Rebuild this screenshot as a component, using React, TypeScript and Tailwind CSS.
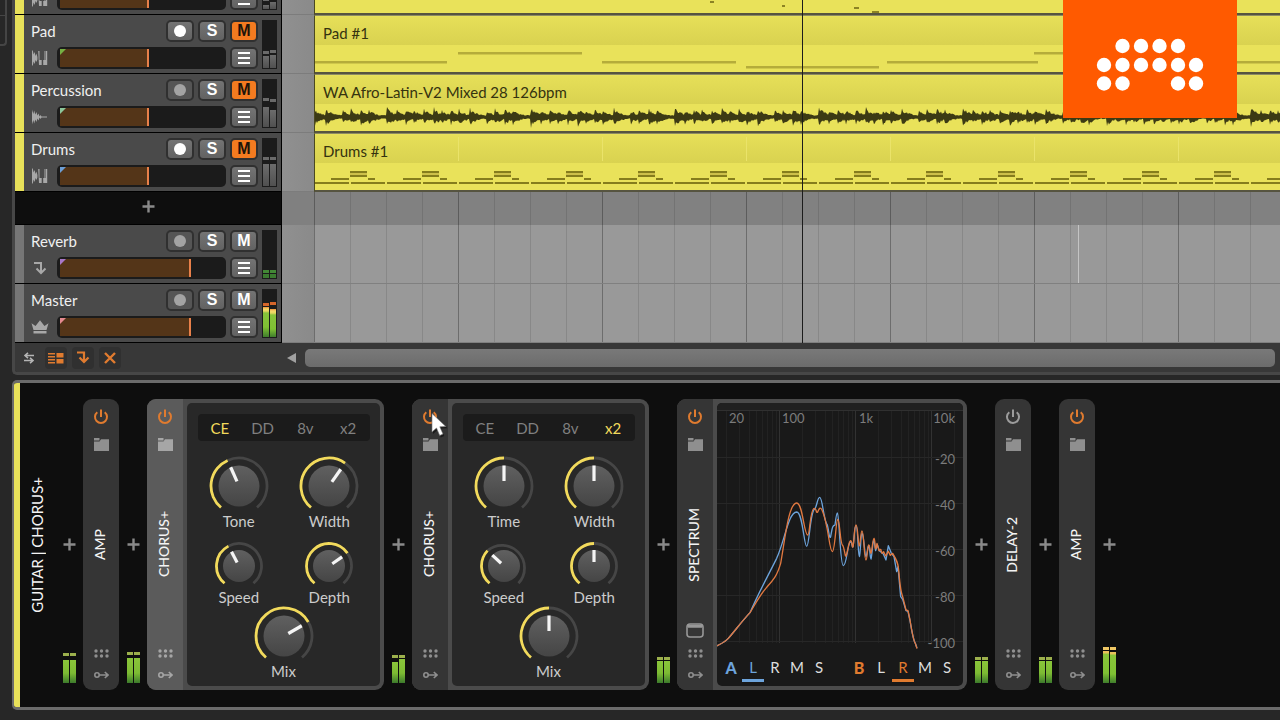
import type { ReactNode } from "react";
import clsx from "clsx";

type Bar = { level: number; gap: number };
type MeterTone = "muted" | "low" | "live" | "hot" | "loud";

type Track = {
  name: string;
  icon: "hybrid" | "audio" | "send" | "master";
  armed: boolean;
  muted: boolean;
  volume: number;
  stripe: string;
  corner: string;
  tone: MeterTone;
  bars: Bar[];
};

const YELLOW = "bg-[#e8e15a]";
const GREY = "bg-[#767676]";

const tracks: Record<string, Track> = {
  guitar: {
    name: "Guitar",
    icon: "hybrid",
    armed: false,
    muted: true,
    volume: 54,
    stripe: YELLOW,
    corner: "border-t-[#7cb342]",
    tone: "muted",
    bars: [
      { level: 4, gap: 4 },
      { level: 7, gap: 2 },
    ],
  },
  pad: {
    name: "Pad",
    icon: "hybrid",
    armed: true,
    muted: true,
    volume: 54,
    stripe: YELLOW,
    corner: "border-t-[#76b043]",
    tone: "muted",
    bars: [
      { level: 12, gap: 2 },
      { level: 13, gap: 2 },
    ],
  },
  percussion: {
    name: "Percussion",
    icon: "audio",
    armed: false,
    muted: true,
    volume: 54,
    stripe: YELLOW,
    corner: "border-t-[#8cc79a]",
    tone: "muted",
    bars: [
      { level: 20, gap: 6 },
      { level: 17, gap: 8 },
    ],
  },
  drums: {
    name: "Drums",
    icon: "hybrid",
    armed: true,
    muted: true,
    volume: 54,
    stripe: YELLOW,
    corner: "border-t-[#6d9fd6]",
    tone: "muted",
    bars: [
      { level: 22, gap: 4 },
      { level: 22, gap: 4 },
    ],
  },
  reverb: {
    name: "Reverb",
    icon: "send",
    armed: false,
    muted: false,
    volume: 80,
    stripe: GREY,
    corner: "border-t-[#a877c9]",
    tone: "low",
    bars: [
      { level: 4, gap: 1 },
      { level: 4, gap: 1 },
    ],
  },
  master: {
    name: "Master",
    icon: "master",
    armed: false,
    muted: false,
    volume: 80,
    stripe: GREY,
    corner: "border-t-[#e58a90]",
    tone: "hot",
    bars: [
      { level: 30, gap: 1 },
      { level: 28, gap: 4 },
    ],
  },
};

const TrackIcon = ({ icon }: { icon: Track["icon"] }) => {
  if (icon === "master") {
    return (
      <svg width="18" height="14" viewBox="0 0 18 14" fill="#a8a8a8">
        <path d="M0.500 3.200l4 2.800L9 0.300l4.500 5.700 4-2.800L15.500 10h-13zM2.500 11h13v2.500h-13z" />
      </svg>
    );
  }
  if (icon === "send") {
    return (
      <svg width="17" height="14" viewBox="0 0 17 14" fill="none" stroke="#a8a8a8" strokeWidth="2">
        <path d="M3 2h7v10M5.500 7.500L10 12l4.500-4.500" />
      </svg>
    );
  }
  if (icon === "audio") {
    return (
      <svg width="17" height="16" viewBox="0 0 17 16" fill="#a8a8a8">
        <path d="M1 0.500l1.300 4.500L3.200 1.500l1.100 4L5.500 3l.9 3.600 1.200-2 .9 2.800L9.600 6l.9 1.500H16v1h-5.500L9.600 10l-1.100-1.400-.9 2.800-1.200-2-.9 3.600-1.200-2.500-1.100 4-.9-3.500L1 15.500z" />
      </svg>
    );
  }
  return (
    <svg width="17" height="16" viewBox="0 0 17 16" fill="#a8a8a8">
      <path d="M1 0.500h.8l.8 4L3.600 2l1 4L5.500 3.500l.9 3.500v2.500L5.500 12l-.9-2-1 4-1-2.500-.8 4H1z" />
      <path d="M7.200 1h1.300v9h2.200v5H8zM12.200 15v-5h1.300V1h2.700v14zM14.200 1v9h.5V1z" />
    </svg>
  );
};

const meterBar: Record<MeterTone, string> = {
  muted: "bg-linear-to-t from-[#505050] to-[#6c6c6c]",
  low: "bg-[#3b7a30]",
  live: "bg-[linear-gradient(to_top,#3c7a2c_0px,#7dbb33_10px,#8ac53a_100%)]",
  hot: "bg-[linear-gradient(to_bottom,#f0903a_0px,#f3d96b_2px,#e8d660_4px,#86c33a_6px,#7fc133_20px,#3f7d2c_100%)]",
  loud: "bg-[linear-gradient(to_bottom,#e8c15a_0px,#e8c15a_2px,#8ac53a_3px,#7fc133_22px,#3f7d2c_100%)]",
};

const meterPeak: Record<MeterTone, string> = {
  muted: "bg-[#6a6a6a]",
  low: "bg-[#438836]",
  live: "bg-[#9cb04c]",
  hot: "bg-[#d4652a]",
  loud: "bg-[#efc765]",
};

const Meter = ({ bars, tone, className }: { bars: Bar[]; tone: MeterTone; className?: string }) => (
  <div className={clsx("flex items-end gap-px", className)}>
    {bars.map((bar, i) => (
      <div key={i} className="w-[6px]">
        <div className={clsx("h-[3px]", meterPeak[tone])} style={{ marginBottom: bar.gap }} />
        <div className={meterBar[tone]} style={{ height: bar.level }} />
      </div>
    ))}
  </div>
);

const TrackButton = ({
  label,
  tone = "normal",
  children,
}: {
  label: string;
  tone?: "normal" | "dim" | "orange";
  children: ReactNode;
}) => (
  <button
    type="button"
    aria-label={label}
    className={clsx(
      "flex h-[22px] w-7 items-center justify-center rounded-[5px] border-2 border-[#303030] font-['Liberation_Sans',sans-serif] text-[16px] leading-[18px] font-bold",
      tone === "normal" && "bg-linear-to-b from-[#747474] to-[#626262] text-white",
      tone === "dim" && "bg-[#555555] text-[#a3a3a3]",
      tone === "orange" && "bg-[#f47b20] text-[#20140a]",
    )}
  >
    {children}
  </button>
);

const TrackFader = ({ track }: { track: Track }) => (
  <div className="flex">
    <div className="flex w-[26px] items-center">
      <TrackIcon icon={track.icon} />
    </div>
    <div className="relative mr-1 flex h-[22px] flex-1 items-center rounded-[5px] bg-[#1b1b1b] px-[3px]">
      <input
        type="range"
        aria-label={`${track.name} volume`}
        defaultValue={track.volume}
        className="h-[18px] w-full appearance-none bg-transparent [&::-webkit-slider-thumb]:h-[18px] [&::-webkit-slider-thumb]:w-[2px] [&::-webkit-slider-thumb]:appearance-none [&::-webkit-slider-thumb]:bg-[#e8804a]"
        style={{
          backgroundImage: `linear-gradient(to right, #543518 ${track.volume}%, transparent ${track.volume}%)`,
        }}
      />
      <span
        className={clsx(
          "absolute top-[2px] left-[3px] border-t-[6px] border-r-[6px] border-r-transparent",
          track.corner,
        )}
      />
    </div>
    <TrackButton label={`${track.name} menu`}>
      <span className="flex flex-col gap-[3px]">
        <span className="h-[2px] w-3 bg-white" />
        <span className="h-[2px] w-3 bg-white" />
        <span className="h-[2px] w-3 bg-white" />
      </span>
    </TrackButton>
  </div>
);

const TrackHeader = ({ track, collapsed }: { track: Track; collapsed?: boolean }) => (
  <div className="flex h-[59px] w-[267px] shrink-0 border-r border-b border-black bg-[#4a4a4a]">
    <div className={clsx("w-[9px]", track.stripe)} />
    <div className="flex flex-1 flex-col justify-end gap-[5px] pb-1 pl-[7px]">
      {!collapsed && (
        <div className="flex gap-1">
          <span className="flex-1 text-[15px] leading-[22px] text-[#f0f0f0]">{track.name}</span>
          <TrackButton label={`Arm ${track.name}`} tone={track.armed ? "normal" : "dim"}>
            <span className="size-3 rounded-full bg-current" />
          </TrackButton>
          <TrackButton label={`Solo ${track.name}`}>S</TrackButton>
          <TrackButton label={`Mute ${track.name}`} tone={track.muted ? "orange" : "normal"}>
            M
          </TrackButton>
        </div>
      )}
      <TrackFader track={track} />
    </div>
    <Meter bars={track.bars} tone={track.tone} className="mt-[5px] mr-1 mb-[4px] ml-1 bg-[#1b1b1b] p-px" />
  </div>
);

const TrackRow = ({
  track,
  collapsed,
  children,
}: {
  track: Track;
  collapsed?: boolean;
  children?: ReactNode;
}) => (
  <div className="flex">
    <TrackHeader track={track} collapsed={collapsed} />
    <div className="w-8 shrink-0 border-b border-[#7c7c7c] bg-linear-to-r from-[#909090] to-[#8a8a8a]" />
    <div className="relative min-w-0 flex-1">{children}</div>
  </div>
);

const GRID =
  "bg-[repeating-linear-gradient(to_right,#00000033_0px,#00000033_1px,transparent_1px,transparent_144px),repeating-linear-gradient(to_right,#0000001c_0px,#0000001c_1px,transparent_1px,transparent_36px)]";

const Clip = ({ name, children }: { name?: string; children: ReactNode }) => (
  <div className="flex h-[59px] flex-col border-t border-b-2 border-l border-t-[#8d8b62] border-b-[#565440] border-l-[#4b4920] bg-[#e9e25a]">
    <div className="mt-px h-7 bg-linear-to-b from-[#e6df58] to-[#d9d250] pl-2 text-[15px] leading-8 text-[#35330f]">
      {name}
    </div>
    {children}
  </div>
);

const padNotes = [
  [0, 17, 132],
  [143, 8, 124],
  [287, 17, 134],
  [431, 22, 133],
  [572, 17, 151],
  [719, 8, 124],
  [863, 17, 134],
  [1007, 22, 133],
];

const PadNotes = () => (
  <svg className="w-full flex-1" fill="#b5ac3a">
    {padNotes.map(([x, y, w]) => (
      <rect key={x} x={x} y={y - 1} width={w} height="2.500" />
    ))}
  </svg>
);

const hits = [
  [0, 8],
  [11, 9],
  [28, 7],
  [36, 8],
  [46, 9],
  [54, 8],
  [72, 10],
  [82, 7],
  [91, 8],
  [99, 7],
  [109, 8],
  [119, 9],
  [127, 7],
  [136, 8],
];

const buildWave = (length: number) => {
  const top: string[] = [];
  const bottom: string[] = [];
  for (let x = 0; x < length; x++) {
    const pos = x % 144;
    let amp = 2;
    for (const [at, size] of hits) {
      const d = pos - at;
      if (d === 0) amp = Math.max(amp, size);
      else if (d > 0 && d < 20) amp = Math.max(amp, size * 0.85 * Math.exp(-d / 10));
    }
    const noise = Math.abs(Math.sin(x * 12.9898) * 43758.5453) % 1;
    const up = amp * (0.6 + noise * 0.5);
    const down = amp * (0.6 + (1 - noise) * 0.5);
    top.push(`${x} ${(13 - up).toFixed(1)}`);
    bottom.unshift(`${x} ${(13 + down).toFixed(1)}`);
  }
  return `M${top.join("L")}L${bottom.join("L")}Z`;
};

const wave = buildWave(2400);

const Waveform = () => (
  <svg className="w-full flex-1">
    <path d={wave} fill="#3c3a14" />
  </svg>
);

const DrumNotes = () => (
  <svg className="w-full flex-1">
    <defs>
      <pattern id="drums" width="72" height="30" patternUnits="userSpaceOnUse">
        <g fill="#857d1c">
          <rect x="0" y="19" width="34" height="2" />
          <rect x="36" y="19" width="34" height="2" />
          <rect x="16" y="15" width="18" height="2" />
          <rect x="53" y="15" width="7" height="2" />
          <rect x="35" y="8" width="17" height="2" />
          <rect x="35" y="12" width="17" height="2" />
        </g>
        <rect x="35" y="10" width="17" height="2" fill="#cdc04a" />
      </pattern>
    </defs>
    <rect width="100%" height="30" fill="url(#drums)" />
  </svg>
);

const Logo = () => (
  <div className="absolute top-0 right-[43px] flex h-[118px] w-[174px] justify-center bg-[#ff5a00] pt-[38px]">
    <svg width="108" height="54" viewBox="0 0 108 54" fill="#fff">
      {[26.5, 45, 63.5, 82].map((x) => (
        <circle key={x} cx={x} cy="8" r="7.200" />
      ))}
      {[8, 26.5, 45, 63.5, 82, 100].map((x) => (
        <circle key={x} cx={x} cy="27" r="7.200" />
      ))}
      {[8, 26.5, 82, 100].map((x) => (
        <circle key={x} cx={x} cy="45.500" r="7.200" />
      ))}
    </svg>
  </div>
);

const FooterButton = ({ label, active, children }: { label: string; active?: boolean; children: ReactNode }) => (
  <button
    type="button"
    aria-label={label}
    className={clsx("flex size-[22px] items-center justify-center rounded-[4px]", active && "bg-[#303030]")}
  >
    {children}
  </button>
);

const ArrangerFooter = () => (
  <div className="flex h-[29px] items-center bg-[#383838]">
    <div className="flex w-[267px] gap-[5px] pl-[3px]">
      <FooterButton label="Swap view">
        <svg width="12" height="12" viewBox="0 0 12 12" fill="none" stroke="#b4b4b4" strokeWidth="1.600">
          <path d="M11 3.500H3M5 0.800L2 3.500l3 2.700M1 8.500h8M7 5.800l3 2.700-3 2.700" />
        </svg>
      </FooterButton>
      <FooterButton label="Tracks" active>
        <svg width="16" height="12" viewBox="0 0 16 12" fill="#e07b2f">
          <path d="M0 1h7v1.500H0zM0 4h7v1.500H0zM0 7h7v1.500H0zM0 10h7v1.500H0zM8.500 1H15.500v4.500H8.500zM8.500 7H15.500v4.500H8.500z" />
        </svg>
      </FooterButton>
      <FooterButton label="Effect tracks" active>
        <svg width="14" height="13" viewBox="0 0 14 13" fill="none" stroke="#e07b2f" strokeWidth="2.200">
          <path d="M1 1.500h7v9.500M3.500 6.500L8 11l4.500-4.500" />
        </svg>
      </FooterButton>
      <FooterButton label="Deactivated tracks" active>
        <svg width="12" height="12" viewBox="0 0 12 12" stroke="#e07b2f" strokeWidth="2.400">
          <path d="M1 1l10 10M11 1L1 11" />
        </svg>
      </FooterButton>
    </div>
    <button type="button" aria-label="Scroll left" className="mx-[5px]">
      <svg width="9" height="10" viewBox="0 0 9 10" fill="#a0a0a0">
        <path d="M9 0v10L0 5z" />
      </svg>
    </button>
    <div className="mr-[5px] ml-1 h-[18px] flex-1 rounded-[5px] bg-linear-to-b from-[#797979] to-[#6c6c6c]" />
  </div>
);

const Arranger = () => (
  <section className="relative min-w-0 flex-1 overflow-hidden rounded-bl-[5px] border-b-[3px] border-l-[3px] border-[#474747]">
    <div className="flex h-[15px] flex-col justify-end overflow-hidden">
      <TrackRow track={tracks.guitar} collapsed>
        <Clip>
          <svg className="w-full flex-1" fill="#8c8324">
            <rect x="395" y="15" width="4" height="2" />
            <rect x="467" y="19" width="3" height="2" />
            <rect x="539" y="21" width="5" height="2" />
            <rect x="557" y="25" width="7" height="2" />
          </svg>
        </Clip>
      </TrackRow>
    </div>
    <TrackRow track={tracks.pad}>
      <Clip name="Pad #1">
        <PadNotes />
      </Clip>
    </TrackRow>
    <TrackRow track={tracks.percussion}>
      <Clip name="WA Afro-Latin-V2 Mixed 28 126bpm">
        <Waveform />
      </Clip>
    </TrackRow>
    <TrackRow track={tracks.drums}>
      <Clip name="Drums #1">
        <DrumNotes />
      </Clip>
      <div className="absolute inset-x-0 top-1 ml-[144px] h-6 bg-[repeating-linear-gradient(to_right,#eae36a_0px,#eae36a_1px,transparent_1px,transparent_144px)]" />
    </TrackRow>
    <div className="flex h-[33px]">
      <button
        type="button"
        aria-label="Add track"
        className="flex w-[267px] shrink-0 items-center justify-center border-r border-b border-black bg-[#0e0e0e] pb-1"
      >
        <Plus />
      </button>
      <div className="w-8 shrink-0 bg-[#808080]" />
      <div className={clsx("flex-1 bg-[#818181]", GRID)} />
    </div>
    <TrackRow track={tracks.reverb}>
      <div className={clsx("h-[59px] border-b border-[#808080] bg-[#999999]", GRID)} />
      <div className="absolute top-0 left-[764px] h-[58px] w-px bg-[#c4c4c4]" />
    </TrackRow>
    <TrackRow track={tracks.master}>
      <div className={clsx("h-[59px] border-b border-[#808080] bg-[#999999]", GRID)} />
    </TrackRow>
    <ArrangerFooter />
    <div className="absolute top-0 bottom-[29px] left-[787px] w-px bg-[#1c1c1c]" />
    <Logo />
  </section>
);

const Plus = () => (
  <svg width="13" height="13" viewBox="0 0 13 13" stroke="#8a8a8a" strokeWidth="2.400">
    <path d="M6.500 0.500v12M0.500 6.500h12" />
  </svg>
);

const Insert = ({ bars, tone = "live" }: { bars: Bar[]; tone?: MeterTone }) => (
  <div className="relative flex w-7 shrink-0 items-center justify-center">
    <button type="button" aria-label="Add device">
      <Plus />
    </button>
    <Meter bars={bars} tone={tone} className="absolute bottom-[7px]" />
  </div>
);

const Strip = ({
  name,
  on = true,
  selected,
  expandable,
}: {
  name: string;
  on?: boolean;
  selected?: boolean;
  expandable?: boolean;
}) => (
  <div className={clsx("flex w-9 shrink-0 flex-col items-center", selected ? "bg-[#5b5b5b]" : "bg-[#353535]")}>
    <div className="flex h-[68px] flex-col items-center gap-[13px] pt-[10px]">
      <button type="button" aria-label={`${name} power`}>
        <svg
          width="16"
          height="16"
          viewBox="0 0 16 16"
          fill="none"
          stroke={on ? "#e07b2f" : "#9c9c9c"}
          strokeWidth="2"
        >
          <path d="M4.300 3.200a6 6 0 1 0 7.400 0M8 0.500v7.500" />
        </svg>
      </button>
      <button type="button" aria-label={`${name} presets`}>
        <svg width="15" height="13" viewBox="0 0 15 13" fill={selected ? "#a6a6a6" : "#8f8f8f"}>
          <path d="M0 0h5.500v2.500H0zM0 3.500h5.500l1.500-2.300h8V13H0z" />
        </svg>
      </button>
    </div>
    <div className="flex flex-1 items-center pr-[2px]">
      <span className="rotate-180 text-[14px] leading-[18px] font-medium whitespace-nowrap text-[#f4f4f4] [writing-mode:vertical-rl]">
        {name}
      </span>
    </div>
    <div className="flex h-[68px] flex-col items-center justify-end gap-[13px] pb-[11px]">
      {expandable && (
        <svg width="18" height="16" viewBox="0 0 18 16" fill="none" stroke="#989898" strokeWidth="1.600">
          <rect x="1" y="1" width="16" height="13" rx="3" />
          <path d="M2 3.200h14" strokeWidth="3" />
        </svg>
      )}
      <svg
        width="15"
        height="9"
        viewBox="0 0 15 9"
        fill={selected ? "#a6a6a6" : "#8f8f8f"}
        className={clsx(expandable && "-mt-[3px]")}
      >
        {[2, 7.5, 13].map((x) => (
          <g key={x}>
            <circle cx={x} cy="2" r="1.700" />
            <circle cx={x} cy="7" r="1.700" />
          </g>
        ))}
      </svg>
      <svg
        width="15"
        height="8"
        viewBox="0 0 15 8"
        fill="none"
        stroke={selected ? "#a6a6a6" : "#8f8f8f"}
        strokeWidth="1.600"
      >
        <circle cx="3" cy="4" r="2.200" />
        <path d="M5.200 4H14M10.800 1L14 4l-3.200 3" />
      </svg>
    </div>
  </div>
);

const Device = ({ children }: { children: ReactNode }) => (
  <div className="flex h-[291px] shrink-0 overflow-hidden rounded-[9px] bg-[#4b4b4b]">{children}</div>
);

const point = (c: number, r: number, deg: number) => {
  const a = (deg * Math.PI) / 180;
  return `${(c + r * Math.sin(a)).toFixed(2)} ${(c - r * Math.cos(a)).toFixed(2)}`;
};

const Knob = ({ label, angle, small }: { label: string; angle: number; small?: boolean }) => {
  const c = small ? 24 : 30;
  const r = small ? 22.5 : 28;
  const body = small ? 16 : 20.5;
  return (
    <label className="relative flex flex-col items-center text-[15px] leading-[18px] text-[#cccccc]">
      <svg width={c * 2} height={small ? 46 : 56} fill="none" strokeWidth="2.800">
        <path d={`M${point(c, r, angle)}A${r} ${r} 0 0 1 ${point(c, r, 140)}`} stroke="#464646" />
        <path
          d={`M${point(c, r, -140)}A${r} ${r} 0 ${angle > 40 ? 1 : 0} 1 ${point(c, r, angle)}`}
          stroke="#f2da5c"
        />
        <circle cx={c} cy={c} r={body} fill="url(#knob)" />
        <path d={`M${point(c, small ? 4 : 5, angle)}L${point(c, body, angle)}`} stroke="#f5f5f5" strokeWidth="3.200" />
      </svg>
      {label}
      <input
        type="range"
        min={-140}
        max={140}
        defaultValue={angle}
        className="absolute inset-0 h-full w-full cursor-pointer opacity-0"
      />
    </label>
  );
};

type ChorusProps = {
  mode: string;
  first: [string, number];
  width: number;
  speed: number;
  depth: number;
  mix: number;
  selected?: boolean;
};

const Chorus = ({ mode, first, width, speed, depth, mix, selected }: ChorusProps) => (
  <Device>
    <Strip name="CHORUS+" selected={selected} />
    <div className="m-1 flex w-[193px] flex-col items-center rounded-[5px] bg-[#282828] pt-[11px]">
      <div className="grid h-[27px] w-[172px] grid-cols-4 rounded-[4px] bg-[#1b1b1b] pl-px">
        {["CE", "DD", "8v", "x2"].map((name) => (
          <button
            key={name}
            type="button"
            className={clsx("text-[15px] leading-[26px]", name === mode ? "text-[#f2da5c]" : "text-[#808080]")}
          >
            {name}
          </button>
        ))}
      </div>
      <div className="mt-[15px] grid w-[182px] grid-cols-2 justify-items-center gap-y-3 pl-px">
        <Knob label={first[0]} angle={first[1]} />
        <Knob label="Width" angle={width} />
        <Knob label="Speed" angle={speed} small />
        <Knob label="Depth" angle={depth} small />
      </div>
      <Knob label="Mix" angle={mix} />
    </div>
  </Device>
);

const decades = [-14, 62, 138, 214];

const SpectrumChart = () => (
  <svg width="246" height="250" fontSize="13" fill="#7c7c7c">
    <rect width="246" height="7" fill="#202020" />
    <g stroke="#272727">
      {decades.flatMap((start) =>
        [1, 2, 3, 4, 5, 6, 7, 8, 9].map((n) => {
          const x = Math.round(start + 76 * Math.log10(n)) + 0.5;
          return <path key={`${start}-${n}`} d={`M${x} 7V240`} stroke={n === 1 ? "#323232" : "#222222"} />;
        }),
      )}
      <path d="M0 7.500H246" stroke="#303030" />
      {[54.5, 100.5, 146.5, 192.5, 238.5].map((y) => (
        <path key={y} d={`M0 ${y}H246`} />
      ))}
    </g>
    <text x="12" y="20">20</text>
    <text x="65" y="20">100</text>
    <text x="142" y="20">1k</text>
    <text x="238" y="20" textAnchor="end">10k</text>
    {[-20, -40, -60, -80, -100].map((db, i) => (
      <text key={db} x="238" y={61 + i * 46} textAnchor="end">
        {db}
      </text>
    ))}
    <svg
      width="246"
      height="245"
      viewBox="141 39 738 735"
      fill="none"
      strokeWidth="4"
      strokeLinejoin="round"
      overflow="visible"
    >
      <path
        stroke="#6da4dc"
        d="M140 768C155 760 165 756 175 745C195 722 215 695 240 668C265 610 290 565 320 505C345 450 355 367 380 366C398 366 402 469 410 469C418 469 420 370 433 358C440 355 442 322 449 322C458 322 460 390 472 405C477 425 478 450 482 440C487 410 489 405 495 405C498 380 500 369 502 369C508 372 510 527 520 527C530 527 532 462 541 455C546 452 546 475 549 470C553 450 553 407 558 407C564 407 564 500 568 500C572 490 572 430 576 430C582 435 584 500 588 500C592 490 594 465 597 467C600 475 600 507 603 507C607 490 608 450 612 450L617 482L622 464L628 482L640 492L648 510L655 467L664 490L672 500L680 545L684 530L692 620L698 628L708 662L714 664L720 692C728 740 732 755 736 760L741 774"
      />
      <path
        stroke="#e07840"
        d="M140 768C155 760 165 756 175 745C195 722 215 695 240 668C260 635 270 615 290 592C310 570 320 560 332 520C345 450 355 340 380 339C398 338 402 435 413 435C420 435 420 355 433 355C440 355 438 372 443 366C448 352 452 352 456 360C475 400 478 485 487 485C495 485 498 388 503 388C510 390 510 462 518 466C523 472 525 502 528 498C535 480 535 455 542 452C547 452 546 478 549 470C553 450 553 405 558 405C564 405 564 468 568 468C571 468 572 423 576 423C582 423 582 510 588 510C592 510 592 465 596 465C600 465 600 490 603 490C607 480 608 445 612 445C616 448 614 482 618 475L621 460L627 482L632 478L636 490L641 485L647 498L655 484L661 496L668 490C680 510 685 520 686 540C690 580 690 600 698 620L708 660L714 662L720 690C728 740 732 755 736 760L741 776"
      />
    </svg>
  </svg>
);

const channelColors = {
  A: { text: "text-[#6da4dc]", line: "border-[#6da4dc]" },
  B: { text: "text-[#e07b2f]", line: "border-[#e07b2f]" },
};

const ChannelPicker = ({ source, active }: { source: "A" | "B"; active: string }) => (
  <div className="grid grid-cols-[repeat(5,22px)] text-center text-[15px] leading-[23px]">
    <span className={clsx("text-[16px] font-black", channelColors[source].text)}>{source}</span>
    {["L", "R", "M", "S"].map((channel) => (
      <button
        key={channel}
        type="button"
        aria-label={`${source} ${channel}`}
        className={clsx(
          "border-b-[3px]",
          channel === active
            ? [channelColors[source].text, channelColors[source].line]
            : "border-transparent text-[#dddddd]",
        )}
      >
        {channel}
      </button>
    ))}
  </div>
);

const Spectrum = () => (
  <Device>
    <Strip name="SPECTRUM" expandable />
    <div className="m-1 flex w-[246px] flex-col justify-between overflow-hidden rounded-[5px] bg-[#191919] pb-1">
      <SpectrumChart />
      <div className="flex justify-between pr-[5px] pl-[3px]">
        <ChannelPicker source="A" active="L" />
        <ChannelPicker source="B" active="R" />
      </div>
    </div>
  </Device>
);

const even = (level: number, gap: number): Bar[] => [
  { level, gap },
  { level, gap },
];

const DeviceChain = () => (
  <section className="ml-3 flex overflow-hidden rounded-l-[5px] border-y-[3px] border-l-2 border-[#6b6b6b] bg-[#0e0e0e]">
    <div className={clsx("w-[6px] shrink-0", YELLOW)} />
    <div className="flex pt-4 pb-[17px]">
      <div className="flex w-[35px] shrink-0 items-center justify-center pr-[2px]">
        <span className="rotate-180 text-[15px] leading-[18px] whitespace-nowrap text-[#f4f4f4] [writing-mode:vertical-rl]">
          GUITAR | CHORUS+
        </span>
      </div>
      <Insert bars={even(23, 4)} />
      <Device>
        <Strip name="AMP" />
      </Device>
      <Insert bars={even(25, 3)} />
      <Chorus mode="CE" first={["Tone", -24]} width={35} speed={-28} depth={55} mix={60} selected />
      <Insert
        bars={[
          { level: 21, gap: 4 },
          { level: 24, gap: 1 },
        ]}
      />
      <Chorus mode="x2" first={["Time", 0]} width={0} speed={-47} depth={0} mix={0} />
      <Insert bars={even(22, 1)} />
      <Spectrum />
      <Insert bars={even(22, 1)} />
      <Device>
        <Strip name="DELAY-2" on={false} />
      </Device>
      <Insert bars={even(22, 1)} />
      <Device>
        <Strip name="AMP" />
      </Device>
      <Insert
        tone="loud"
        bars={[
          { level: 32, gap: 1 },
          { level: 31, gap: 2 },
        ]}
      />
    </div>
  </section>
);

const App = () => (
  <main className="relative flex min-h-screen flex-col gap-[5px] overflow-hidden bg-[#272727] font-[Lato,sans-serif]">
    <svg width="0" height="0" className="absolute">
      <defs>
        <linearGradient id="knob" x1="0" y1="0" x2="0" y2="1">
          <stop offset="0" stopColor="#606060" />
          <stop offset="1" stopColor="#454545" />
        </linearGradient>
      </defs>
    </svg>
    <div className="flex">
      <div className="w-3 shrink-0">
        <div className="flex h-[46px] w-[7px] flex-col rounded-br-[4px] border-r-2 border-b-2 border-[#454545]">
          <div className="h-4 border-b border-[#454545]" />
        </div>
      </div>
      <Arranger />
    </div>
    <DeviceChain />
    <svg width="20" height="28" viewBox="0 0 20 28" className="absolute top-[412px] left-[430px]">
      <path d="M3 3v19l4.500-4 3.300 7.500 3.500-1.600L11 16.500l6.500-.3z" fill="#000" opacity="0.500" />
      <path
        d="M2 1.500v18.500l4.500-4 3.200 7.500 3.300-1.500-3.200-7.200 6-.3z"
        fill="#fff"
        stroke="#777"
        strokeWidth="0.600"
      />
    </svg>
  </main>
);

export default App;
